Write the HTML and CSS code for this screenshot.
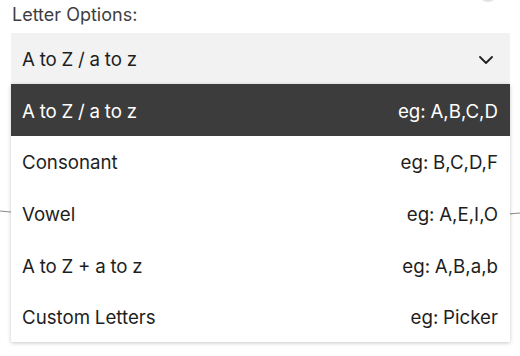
FILE: index.html
```html
<!DOCTYPE html>
<html>
<head>
<meta charset="utf-8">
<link rel="stylesheet" href="styles.css">
</head>
<body>
<svg class="backdrop" width="520" height="356" viewBox="0 0 520 356">
  <path d="M0 211 Q 260 240 520 213" fill="none" stroke="#8a8a8a" stroke-width="1.2"/>
  <ellipse cx="488" cy="-6" rx="9" ry="8" fill="#e2e2e2"/>
</svg>
<div class="field">
  <div class="label">Letter Options:</div>
  <div class="select">
    <span>A to Z / a to z</span>
    <svg class="chevron" width="14" height="8" viewBox="0 0 14 8"><path d="M1 1 L7 7 L13 1" fill="none" stroke="#222" stroke-width="1.8" stroke-linecap="round" stroke-linejoin="round"/></svg>
  </div>
  <div class="menu">
    <div class="option selected"><span>A to Z / a to z</span><span>eg: A,B,C,D</span></div>
    <div class="option"><span>Consonant</span><span>eg: B,C,D,F</span></div>
    <div class="option"><span>Vowel</span><span>eg: A,E,I,O</span></div>
    <div class="option"><span>A to Z + a to z</span><span>eg: A,B,a,b</span></div>
    <div class="option"><span>Custom Letters</span><span>eg: Picker</span></div>
  </div>
</div>
</body>
</html>
```
FILE: styles.css
```css
html, body {
  margin: 0;
  padding: 0;
  background: #ffffff;
}
body {
  font-family: "Inter", "Liberation Sans", sans-serif;
  color: #1e1e1e;
  width: 520px;
  height: 356px;
  overflow: hidden;
  position: relative;
}
.backdrop {
  position: absolute;
  left: 0;
  top: 0;
  z-index: 0;
}
.field {
  position: relative;
  z-index: 1;
  padding: 4px 10px 0 11px;
}
.label {
  font-size: 18px;
  line-height: 22px;
  color: #3e3e3e;
  padding-left: 1px;
  margin-bottom: 7px;
}
.select {
  box-sizing: border-box;
  height: 51px;
  background: #f2f2f2;
  display: flex;
  align-items: center;
  justify-content: space-between;
  padding: 2px 17px 0 11px;
  font-size: 18.7px;
  word-spacing: -0.5px;
}
.chevron {
  display: block;
}
.menu {
  background: #ffffff;
  box-shadow: 0 1px 4px rgba(0, 0, 0, 0.22);
}
.option {
  box-sizing: border-box;
  height: 51.6px;
  display: flex;
  align-items: center;
  justify-content: space-between;
  padding: 3px 12px 0 11px;
  font-size: 18.7px;
  word-spacing: -0.5px;
  color: #1e1e1e;
}
.option.selected {
  background: #3c3c3c;
  color: #ffffff;
}
```
